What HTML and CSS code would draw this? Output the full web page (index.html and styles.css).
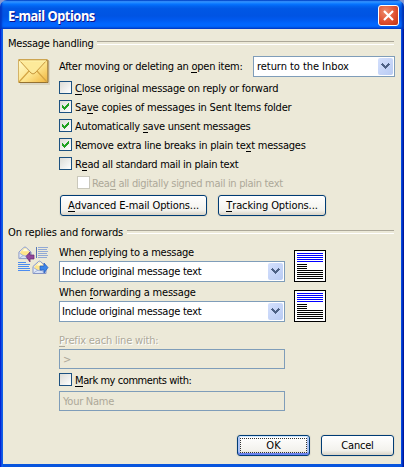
FILE: index.html
```html
<!DOCTYPE html>
<html lang="en">
<head>
<meta charset="utf-8">
<title>E-mail Options</title>
<link rel="stylesheet" href="styles.css">
</head>
<body>
<svg width="0" height="0" class="defs">
  <defs>
    <linearGradient id="gold" x1="0" y1="0" x2="1" y2="1"><stop offset="0" stop-color="#fffbd0"/><stop offset=".55" stop-color="#fde38a"/><stop offset="1" stop-color="#f0b43c"/></linearGradient>
    <linearGradient id="paper" x1="0" y1="0" x2="1" y2="1"><stop offset="0" stop-color="#fff"/><stop offset="1" stop-color="#c3d3f0"/></linearGradient>
    <symbol id="arrow" viewBox="0 0 9 7"><path d="M0 1h1V0h1v1h1v1h1v1h1V2h1V1h1V0h1v1h1v1H8v1H7v1H6v1H5v1H4V5H3V4H2V3H1V2H0z" fill="#4d6185"/></symbol>
    <symbol id="tick" viewBox="0 0 7 7"><path d="M0 2h1v1h1v1h1v-1h1v-1h1v-1h1v-1h1v3h-1v1h-1v1h-1v1h-1v1h-1v-1h-1v-1h-1z" fill="#21a121"/></symbol>
    <symbol id="letter" viewBox="0 0 32 32">
      <path d="M0 0h32v32h-32z" fill="#000"/><path d="M1 1h30v30h-30z" fill="#fff"/>
      <path d="M3 3h26v1h-26zM3 5h26v1h-26zM3 7h26v1h-26zM3 9h26v1h-26zM3 11h26v1h-26z" fill="#00f"/>
      <path d="M3 14h10v1h-10zM3 16h10v1h-10zM3 18h10v1h-10zM3 20h26v1h-26zM3 22h26v1h-26zM3 24h26v1h-26zM3 26h26v1h-26zM3 28h26v1h-26z" fill="#000"/>
    </symbol>
    <symbol id="mail" viewBox="0 0 15 14">
      <path d="M1 6 6.500 1Q7.500 .3 8.500 1L14 6V13H1z" fill="url(#paper)" stroke="#8594c4"/>
      <path d="M2.500 6 6 2.500Q7.500 1 9 2.500L12.500 6V8L7.500 10 2.500 8z" fill="#ffe58a"/><path d="M4.500 5 7 2.500h2l2 2.500z" fill="#fffbe0"/>
      <path d="M1.500 7 6 10h3l4.500-3M1.500 12.500 6 9.500M13.500 12.500 9 9.500" fill="none" stroke="#91a5d2" stroke-width=".8"/>
    </symbol>
  </defs>
</svg>
<main class="window">
  <header class="titlebar">
    <h1>E-mail Options</h1>
    <button class="close" aria-label="Close"><svg width="11" height="11" viewBox="0 0 11 11"><path d="M1 1 10 10M10 1 1 10" stroke="#fff" stroke-width="2.200"/></svg></button>
  </header>
  <div class="content">
    <h2><span class="t1">Message handling</span></h2>
    <section class="handling">
      <svg class="envelope" width="32" height="26" viewBox="0 0 32 26">
        <path d="M2 2h30v24h-30z" fill="#b9b29b" opacity=".35"/>
        <path d="M.5 .5h29v23h-29z" fill="url(#gold)" stroke="#d4b366"/>
        <path d="M1 23.500h29V1" fill="none" stroke="#947131"/>
        <path d="M1 23 11 12M29 23 19 12" stroke="#d5a544" stroke-width="1.200"/>
        <path d="M1 1 13 14Q15 16 17 14L29 1z" fill="#fdea9a" stroke="#c6963c"/>
        <path d="M2 2h26" stroke="#fff3ad"/>
      </svg>
      <div class="rows">
        <div class="after"><span class="t2">After moving or deleting an <u>o</u>pen item:</span>
          <div class="combo first"><span class="t3">return to the Inbox</span><i><svg width="9" height="7"><use href="#arrow"/></svg></i></div></div>
        <label class="check"><b></b><span class="t4"><u>C</u>lose original message on reply or forward</span></label>
        <label class="check"><b><svg width="7" height="7"><use href="#tick"/></svg></b><span class="t5">Sa<u>v</u>e copies of messages in Sent Items folder</span></label>
        <label class="check"><b><svg width="7" height="7"><use href="#tick"/></svg></b><span class="t6">Automatically <u>s</u>ave unsent messages</span></label>
        <label class="check"><b><svg width="7" height="7"><use href="#tick"/></svg></b><span class="t7">Remove extra line breaks in plain te<u>x</u>t messages</span></label>
        <label class="check"><b></b><span class="t8">R<u>e</u>ad all standard mail in plain text</span></label>
        <label class="check off"><b></b><span class="t9">Rea<u>d</u> all digitally signed mail in plain text</span></label>
        <div class="buttons"><button class="btn adv"><span class="t10"><u>A</u>dvanced E-mail Options...</span></button><button class="btn track"><span class="t11"><u>T</u>racking Options...</span></button></div>
      </div>
    </section>
    <h2><span class="t12">On replies and forwards</span></h2>
    <section class="replies">
      <svg class="mails" width="31" height="30" viewBox="0 0 31 30">
        <use href="#mail" width="14" height="14"/><use href="#mail" x="14" y="14" width="15" height="15"/>
        <path d="M8 10.500 12 6V9h4v4h-4v3z" fill="#94489a" stroke="#682d72" stroke-width=".7"/>
        <path d="M30 21.500 26 17V20h-4v4h4v3z" fill="#3d86e8" stroke="#2459ba" stroke-width=".7"/>
        <path d="M18 1h1v11h-1z" fill="#5878b6"/>
        <path d="M20 1h10v1h-10zM20 3h9v1h-9zM20 5h10v1h-10zM20 7h9v1h-9zM20 9h10v1h-10zM20 11h9v1h-9z" fill="#91a9d5"/>
        <path d="M0 16h8v1h-8zM0 18h12v1h-12zM0 20h11v1h-11zM0 22h12v1h-12zM0 24h12v1h-12z" fill="#4c8cf0"/>
      </svg>
      <div class="rows">
        <div class="reply"><div><p class="t13">When <u>r</u>eplying to a message</p><div class="combo"><span class="t15">Include original message text</span><i><svg width="9" height="7"><use href="#arrow"/></svg></i></div></div><svg width="32" height="32"><use href="#letter"/></svg></div>
        <div class="reply"><div><p class="t14">When <u>f</u>orwarding a message</p><div class="combo"><span class="t15">Include original message text</span><i><svg width="9" height="7"><use href="#arrow"/></svg></i></div></div><svg width="32" height="32"><use href="#letter"/></svg></div>
        <p class="prefix"><span class="t16"><u>P</u>refix each line with:</span></p>
        <div class="field"><span>&gt;</span></div>
        <label class="check mark"><b></b><span class="t17"><u>M</u>ark my comments with:</span></label>
        <div class="field name"><span class="t18">Your Name</span></div>
      </div>
    </section>
    <footer><button class="btn ok"><span class="t19">OK</span></button><button class="btn cancel"><span class="t20">Cancel</span></button></footer>
  </div>
</main>
</body>
</html>
```
FILE: styles.css
```css
* { box-sizing: border-box; margin: 0; padding: 0; }
body { width: 404px; height: 467px; overflow: hidden; background: #8797d0; font: 11px/13px "DejaVu Sans Condensed", "DejaVu Sans", sans-serif; font-stretch: condensed; color: #000; }
.defs { position: absolute; }
svg { display: block; flex: none; }
span, p { white-space: nowrap; }
u { text-decoration: none; box-shadow: 0 1px currentColor; display: inline-block; height: 12px; line-height: 13px; vertical-align: top; }
.window { width: 404px; height: 467px; border-radius: 7px 7px 0 0; overflow: hidden; background: #ece9d8; display: flex; flex-direction: column; }
.titlebar { height: 29px; flex: none; padding: 3px 5px 0 8px; display: flex; justify-content: space-between; box-shadow: inset 2px 0 2px #0037c5, inset -2px 0 2px #0030b0; background: linear-gradient(#0058d6 0, #3593ff 5%, #288eff 8%, #127dff 12%, #036ffc 16%, #0262ee 22%, #0057e5 30%, #0054e3 55%, #0059ee 67%, #0166fe 82%, #0166fe 90%, #0054e0 96%, #003dd7 100%); }
h1 { color: #fff; font: bold 14px/20px "Noto Sans", sans-serif; letter-spacing: -.5px; margin-top: 3px; white-space: nowrap; text-shadow: 1px 1px #0f1089; transform: scaleX(.92); transform-origin: 0 0; }
.close { width: 21px; height: 21px; margin-top: 2px; border: 1px solid #fff; border-radius: 3px; background: radial-gradient(circle at 35% 30%, #ee8c6c, #df5030 55%, #bf3211); display: flex; align-items: center; justify-content: center; }
.content { flex: 1; display: flex; flex-direction: column; padding: 8px 7px 0 5px; border: solid; border-width: 0 3px 3px; border-color: #0831d9; border-image: linear-gradient(90deg, #0019cf 0, #0831d9 1px, #166aee 2px, #0855dd 3px, #0855dd 401px, #0040e0 402px, #001fa8 403px, #00138c 404px) 0 3 3 3; }
h2 { font: inherit; height: 13px; display: flex; align-items: center; gap: 4px; }
h2::after { content: ""; flex: 1; height: 2px; margin-top: -1px; border-top: 1px solid #aca899; border-bottom: 1px solid #fff; }
section { display: flex; }
section > svg { margin-left: 10px; }
.handling .envelope { margin-top: 9px; margin-right: 9px; }
.handling .rows { padding-top: 6px; }
.after { display: flex; justify-content: space-between; align-items: center; width: 336px; margin-bottom: 4px; }
.combo { width: 226px; height: 21px; border: 1px solid #7f9db9; background: #fff; padding: 0 1px 0 2px; display: flex; align-items: center; justify-content: space-between; }
.combo.first { width: 142px; padding-left: 3px; }
.combo i { width: 15px; height: 17px; border-radius: 2px; background: linear-gradient(135deg, #d4e0fd, #b9cbf3); display: flex; align-items: center; justify-content: center; }
.check { height: 13px; margin-bottom: 6px; display: flex; gap: 3px; }
.check span { padding-top: 1px; height: 15px; }
.check b { width: 13px; height: 13px; flex: none; border: 1px solid #1c5180; background: linear-gradient(135deg, #dcdcd7, #fff); display: flex; align-items: center; justify-content: center; }
.check.off { margin-left: 18px; gap: 2px; color: #aca899; }
.check.off b { border-color: #cac8bb; background: #fff; }
.buttons { display: flex; gap: 11px; padding-left: 1px; }
.btn { height: 21px; font: inherit; border: 1px solid #003c74; border-radius: 3px; background: linear-gradient(#fff, #f3f2ed 75%, #d9d3c6); box-shadow: 0 0 0 1px #e3dfcf; }
.adv { width: 147px; }
.track { width: 108px; }
.handling + h2 { margin-top: 10px; }
.replies .mails { margin-top: 7px; margin-right: 10px; }
.replies .rows { padding-top: 7px; }
.reply { display: flex; gap: 9px; align-items: flex-end; margin-bottom: 4px; }
.reply p { margin-bottom: 2px; }
.prefix { margin: 12px 0 2px; color: #aca899; text-shadow: 1px 1px #fff; }
.field { width: 226px; height: 20px; border: 1px solid #7f9db9; padding: 3px; color: #aca899; margin-bottom: 4px; }
.mark { margin-bottom: 5px; }
.name { margin-bottom: 0; }
footer { display: flex; justify-content: flex-end; gap: 11px; margin-top: 24px; }
.ok, .cancel { width: 73px; }
.ok { outline: 1px dotted #333; outline-offset: -4px; box-shadow: inset 0 1px #cee7ff, inset 0 -2px #6982ee, inset 2px 0 #adc4f3, inset -2px 0 #adc4f3, 0 0 0 1px #e3dfcf; }

/* Tracking per label */
.t1, .t18 { letter-spacing: -.25px; }
.t2, .t15 { letter-spacing: -.24px; }
.t3 { letter-spacing: -.05px; }
.t4 { letter-spacing: -.22px; }
.t5, .t14, .t20 { letter-spacing: -.2px; }
.t6 { letter-spacing: -.26px; }
.t7 { letter-spacing: -.23px; }
.t8 { letter-spacing: -.28px; }
.t9 { letter-spacing: -.31px; }
.t10 { letter-spacing: -.12px; }
.t11 { letter-spacing: -.1px; }
.t12 { letter-spacing: -.13px; }
.t13 { letter-spacing: -.27px; }
.t16 { letter-spacing: -.18px; }
.t17 { letter-spacing: -.43px; }
```
